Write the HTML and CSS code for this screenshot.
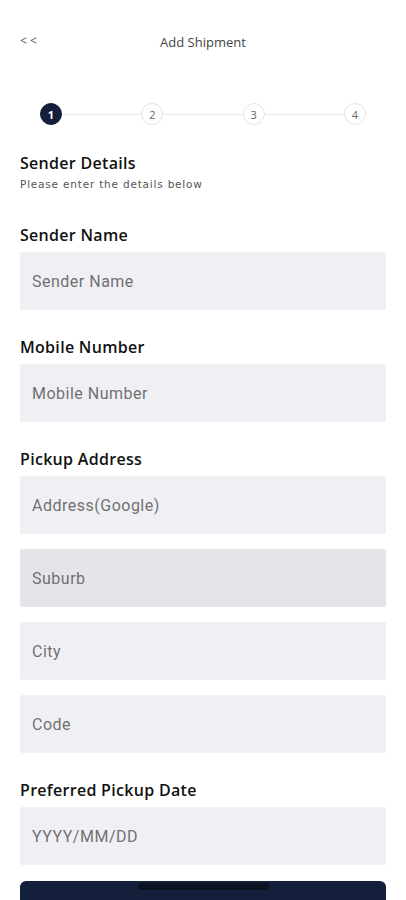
FILE: index.html
```html
<!DOCTYPE html>
<html>
<head>
  <title>Add Shipment</title>
  <link rel="stylesheet" href="styles.css">
</head>
<body>
  <header class="topbar">
    <span class="back">&lt; &lt;</span>
    <h1 class="title">Add Shipment</h1>
  </header>

  <div class="stepper">
    <span class="step active">1</span>
    <span class="line"></span>
    <span class="step">2</span>
    <span class="line"></span>
    <span class="step">3</span>
    <span class="line"></span>
    <span class="step">4</span>
  </div>

  <section class="intro">
    <h2>Sender Details</h2>
    <p>Please enter the details below</p>
  </section>

  <form class="form">
    <div class="group">
      <label>Sender Name</label>
      <input type="text" class="field" placeholder="Sender Name">
    </div>

    <div class="group">
      <label>Mobile Number</label>
      <input type="text" class="field" placeholder="Mobile Number">
    </div>

    <div class="group">
      <label>Pickup Address</label>
      <input type="text" class="field" placeholder="Address(Google)">
      <input type="text" class="field focused" placeholder="Suburb">
      <input type="text" class="field" placeholder="City">
      <input type="text" class="field" placeholder="Code">
    </div>

    <div class="group">
      <label>Preferred Pickup Date</label>
      <input type="text" class="field" placeholder="YYYY/MM/DD">
    </div>

    <!-- button sits below the fold, only its top edge shows -->
    <button type="button" class="next" aria-label="Next"></button>
  </form>

  <div class="home-bar"></div>
</body>
</html>
```

FILE: styles.css
```css
/* Add shipment - step 1 */

body {
  font-family: "Open Sans", Arial, sans-serif;
  margin: 0;
  padding: 0 20px;
  background: #fff;
  color: #111;
  height: 900px;
  overflow: hidden;
  position: relative;
}

.topbar {
  position: relative;
  height: 84px;
  display: flex;
  align-items: center;
  justify-content: center;
}

.back {
  position: absolute;
  left: 0;
  top: 32px;
  font-size: 12px;
  color: #555;
}

.title {
  margin: 0;
  font-size: 13px;
  font-weight: 400;
  color: #444;
}

.stepper {
  display: flex;
  align-items: center;
  margin: 19px 20px 0;
  height: 22px;
}

.step {
  width: 20px;
  height: 20px;
  border: 1px solid #e3e3e3;
  border-radius: 50%;
  display: flex;
  align-items: center;
  justify-content: center;
  font-size: 11px;
  color: #666;
  background: #fff;
}

.step.active {
  background: #14203b;
  border-color: #14203b;
  color: #fff;
  font-weight: 700;
}

.line {
  flex: 1;
  height: 1px;
  background: #ececec;
}

.intro {
  margin-top: 27px;
}

.intro h2 {
  margin: 0;
  font-size: 16px;
  font-weight: 600;
  letter-spacing: 0.3px;
  line-height: 22px;
}

.intro p {
  margin: 3px 0 0;
  font-family: "DejaVu Sans", sans-serif;
  font-size: 10.5px;
  letter-spacing: 0.8px;
  color: #555;
  line-height: 14px;
}

.form {
  margin-top: 34px;
}

.group {
  display: flex;
  flex-direction: column;
  gap: 15px;
  margin-bottom: 27px;
}

.group label {
  font-size: 16px;
  font-weight: 600;
  letter-spacing: 0.3px;
  line-height: 20px;
  margin-bottom: -8px;
}

.field {
  height: 58px;
  border: none;
  border-radius: 2px;
  background: #f0f0f4;
  padding: 0 12px;
  font-family: Roboto, Arial, sans-serif;
  font-size: 16px;
  letter-spacing: 0.5px;
  color: #333;
  outline: none;
}

.field::placeholder {
  color: #707074;
}

.field.focused {
  background: #e5e5e9;
}

.next {
  display: block;
  width: 100%;
  height: 52px;
  margin-top: -11px;
  border: none;
  border-radius: 6px;
  background: #14203b;
}

.home-bar {
  position: absolute;
  left: 138px;
  top: 883px;
  width: 131px;
  height: 7px;
  border-radius: 4px;
  background: #0b1220;
}
```
